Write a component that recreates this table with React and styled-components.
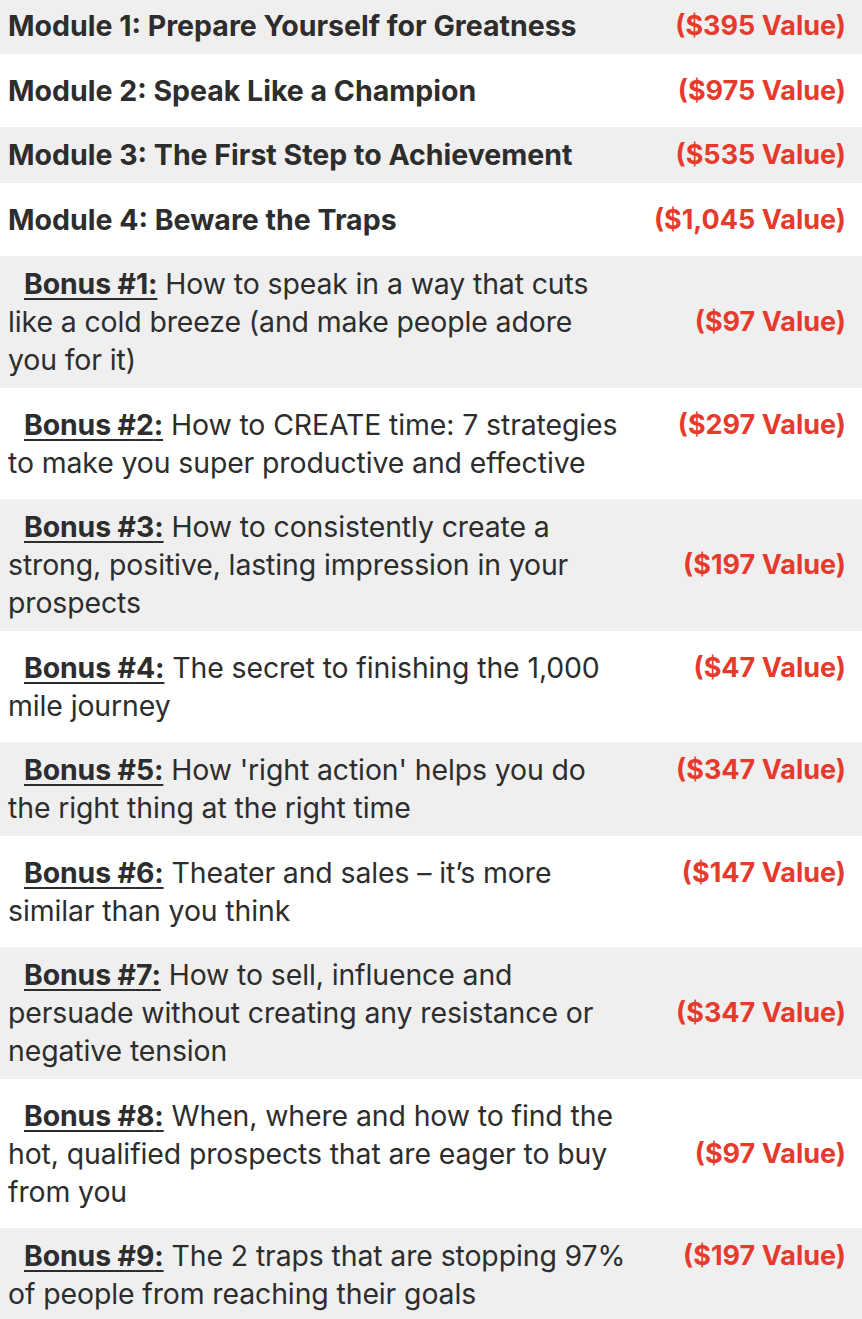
import React from 'react';
import styled, { createGlobalStyle } from 'styled-components';

const GlobalStyle = createGlobalStyle`
  html, body { margin: 0; padding: 0; background: #ffffff; }
  body { font-family: Inter, "Open Sans", sans-serif; color: #2d2d2d; }
`;

const Table = styled.div`
  display: flex;
  flex-direction: column;
  width: 862px;
  margin-top: -2px;
`;

const Row = styled.div`
  display: flex;
  align-items: stretch;
  background: ${p => (p.$shaded ? '#efefef' : '#ffffff')};
  padding: ${p => (p.$shaded ? '9px' : '17.5px')} 0;
`;

const Cell = styled.div`
  box-sizing: border-box;
  flex: 0 0 646px;
  width: 646px;
  padding: 0 20px 0 8px;
  font-size: 28.4px;
  line-height: 38px;
`;

const Title = styled(Cell)`
  font-size: 28.5px;
  font-weight: 700;
  white-space: nowrap;
`;

const Desc = styled(Cell)`
  font-weight: 400;
  letter-spacing: -0.1px;
`;

const Label = styled.span`
  margin-left: 16px;
  font-weight: 700;
  text-decoration: underline;
  text-decoration-thickness: 2px;
  text-underline-offset: 4px;
`;

const Price = styled.div`
  flex: 1;
  align-self: ${p => (p.$top ? 'flex-start' : 'center')};
  text-align: right;
  padding-right: 16px;
  color: #e63a2d;
  font-size: 27px;
  line-height: 38px;
  font-weight: 700;
  white-space: nowrap;
`;

const modules = [
  ['Module 1: Prepare Yourself for Greatness', '($395 Value)'],
  ['Module 2: Speak Like a Champion', '($975 Value)'],
  ['Module 3: The First Step to Achievement', '($535 Value)'],
  ['Module 4: Beware the Traps', '($1,045 Value)'],
];

const bonuses = [
  ['How to speak in a way that cuts like a cold breeze (and make people adore you for it)', '($97 Value)', false],
  ['How to CREATE time: 7 strategies to make you super productive and effective', '($297 Value)', true],
  ['How to consistently create a strong, positive, lasting impression in your prospects', '($197 Value)', false],
  ['The secret to finishing the 1,000 mile journey', '($47 Value)', true],
  ["How 'right action' helps you do the right thing at the right time", '($347 Value)', true],
  ['Theater and sales \u2013 it\u2019s more similar than you think', '($147 Value)', true],
  ['How to sell, influence and persuade without creating any resistance or negative tension', '($347 Value)', false],
  ['When, where and how to find the hot, qualified prospects that are eager to buy from you', '($97 Value)', false],
  ['The 2 traps that are stopping 97% of people from reaching their goals', '($197 Value)', true],
];

export default function App() {
  return (
    <>
      <GlobalStyle />
      <Table>
        {modules.map(([title, price], i) => (
          <Row key={title} $shaded={i % 2 === 0}>
            <Title>{title}</Title>
            <Price>{price}</Price>
          </Row>
        ))}
        {bonuses.map(([text, price, top], i) => (
          <Row key={text} $shaded={i % 2 === 0}>
            <Desc>
              <Label>Bonus #{i + 1}:</Label> {text}
            </Desc>
            <Price $top={top}>{price}</Price>
          </Row>
        ))}
      </Table>
    </>
  );
}
